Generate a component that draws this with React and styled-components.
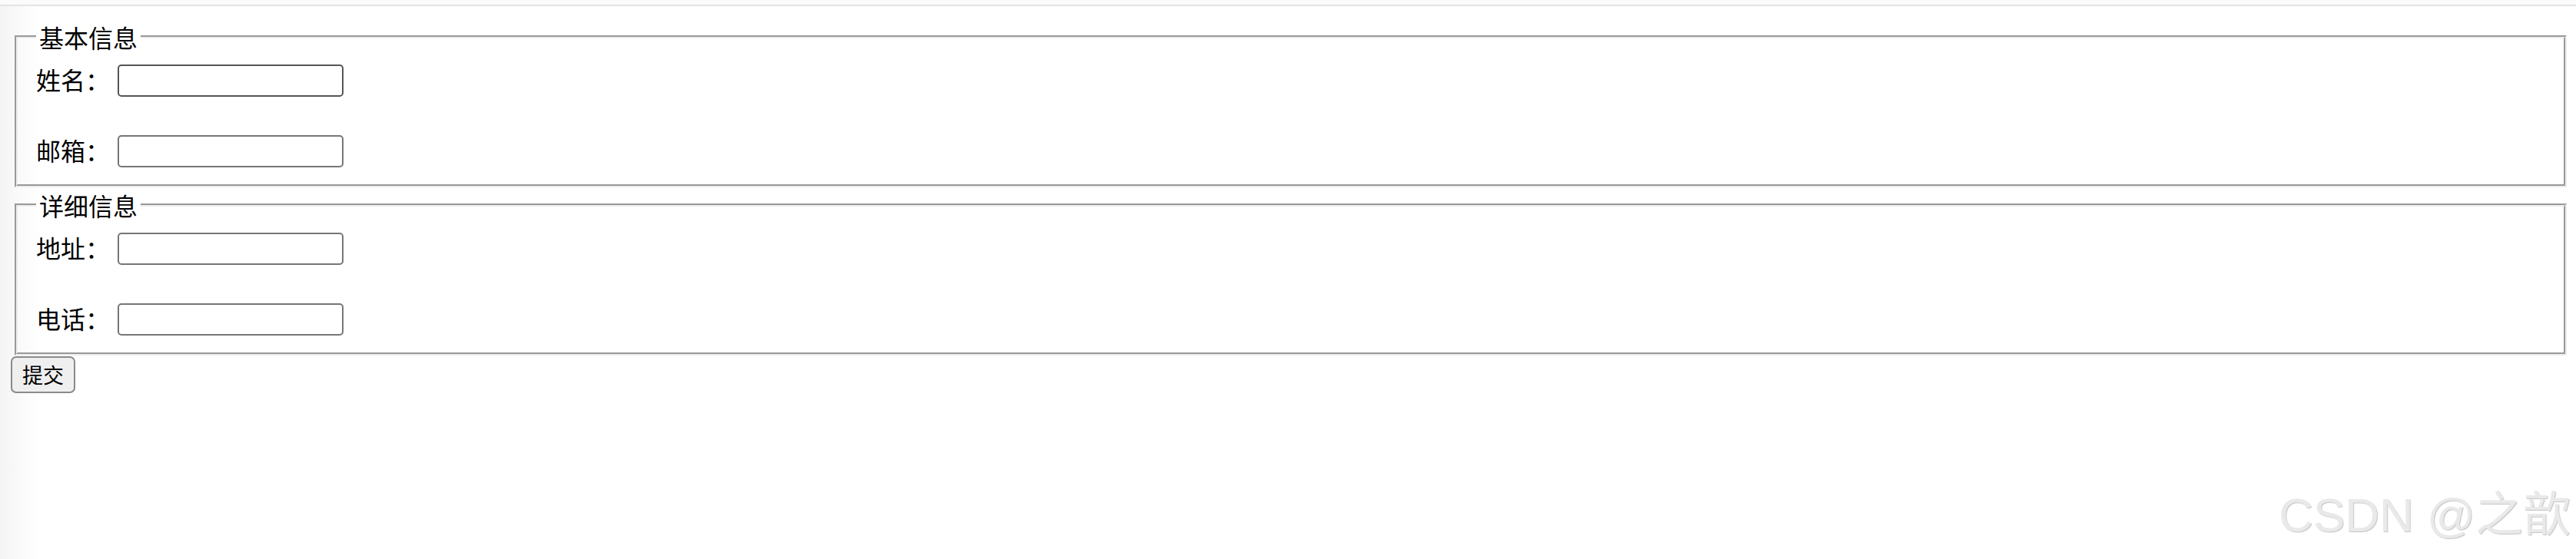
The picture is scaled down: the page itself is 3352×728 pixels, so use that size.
import styled, { createGlobalStyle } from "styled-components";

const GlobalStyle = createGlobalStyle`
  html, body {
    margin: 0;
    padding: 0;
    background: #ffffff;
  }
  body {
    font-family: "Noto Sans CJK SC", "Noto Sans", sans-serif;
    color: #000;
  }
`;

const Screen = styled.div`
  position: relative;
  width: 3352px;
  height: 728px;
  overflow: hidden;
  background: linear-gradient(to right, #f4f4f4 0px, #fbfbfb 30px, #ffffff 56px);
`;

const TopEdge = styled.div`
  height: 6px;
  background: #fbfbfb;
  border-bottom: 2px solid #e4e4e4;
  margin-bottom: 1px;
`;

const Form = styled.form`
  padding: 16px 10px 0 14px;
`;

const FieldSet = styled.fieldset`
  margin: 0 2px 0 5px;
  padding: 11px 24px 20px;
  border: 4px groove #ededed;
  min-inline-size: min-content;
`;

const Legend = styled.legend`
  padding: 0 4px;
  font-size: 32px;
  line-height: 46px;
`;

const Row = styled.div`
  display: flex;
  align-items: center;
  height: 46px;
  margin-bottom: ${(p) => (p.$last ? "0" : "46px")};
`;

const Label = styled.label`
  font-size: 32px;
  line-height: 46px;
  width: 106px;
  flex-shrink: 0;
  margin-bottom: 5px;
`;

const TextInput = styled.input`
  box-sizing: border-box;
  width: 294px;
  height: 42px;
  margin: 0;
  padding: 2px 4px;
  border: 2px solid ${(p) => (p.$dark ? "#555555" : "#767676")};
  border-radius: 5px;
  background: #fff;
  font-size: 26px;
`;

const SubmitButton = styled.button`
  box-sizing: border-box;
  width: 84px;
  height: 48px;
  margin: 1px 0 0;
  padding: 0;
  border: 2px solid #8a8a8a;
  border-radius: 7px;
  background: #efefef;
  font-family: "Noto Sans CJK SC", sans-serif;
  font-size: 27px;
  line-height: 44px;
  color: #000;
`;

const Watermark = styled.div`
  position: absolute;
  right: 7px;
  bottom: 26px;
  font-family: "Liberation Sans", "Noto Sans CJK SC", sans-serif;
  font-size: 62px;
  line-height: 1;
  color: #e9e9e9;
  text-shadow: 1px 1px 1px #c4c4c4;
  white-space: nowrap;
`;

const groups = [
  { title: "基本信息", fields: ["姓名：", "邮箱："] },
  { title: "详细信息", fields: ["地址：", "电话："] },
];

export default function App() {
  return (
    <Screen>
      <GlobalStyle />
      <TopEdge />
      <Form onSubmit={(e) => e.preventDefault()}>
        {groups.map((group, gi) => (
          <FieldSet key={group.title}>
            <Legend>{group.title}</Legend>
            {group.fields.map((field, fi) => (
              <Row key={field} $last={fi === group.fields.length - 1}>
                <Label>{field}</Label>
                <TextInput type="text" $dark={gi === 0 && fi === 0} />
              </Row>
            ))}
          </FieldSet>
        ))}
        <SubmitButton type="submit">提交</SubmitButton>
      </Form>
      <Watermark>CSDN @之歆</Watermark>
    </Screen>
  );
}
